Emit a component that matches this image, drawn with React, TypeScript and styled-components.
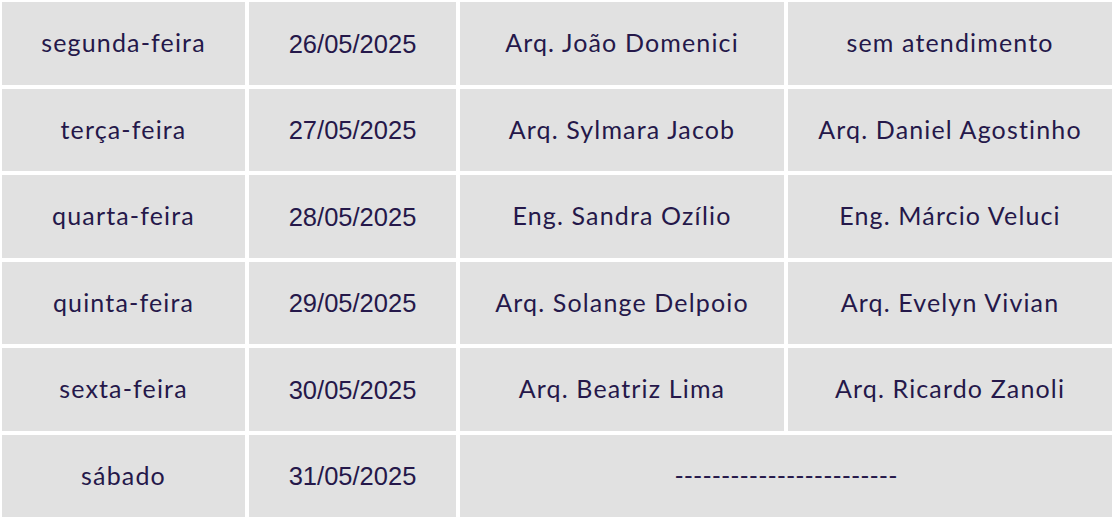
import * as React from 'react';
import styled, { createGlobalStyle } from 'styled-components';

const GlobalStyle = createGlobalStyle`
  html, body {
    margin: 0;
    padding: 0;
    background: #ffffff;
  }
`;

interface Plantao {
  dia: string;
  data: string;
  manha: string;
  tarde?: string;
}

const plantoes: Plantao[] = [
  { dia: 'segunda-feira', data: '26/05/2025', manha: 'Arq. João Domenici', tarde: 'sem atendimento' },
  { dia: 'terça-feira', data: '27/05/2025', manha: 'Arq. Sylmara Jacob', tarde: 'Arq. Daniel Agostinho' },
  { dia: 'quarta-feira', data: '28/05/2025', manha: 'Eng. Sandra Ozílio', tarde: 'Eng. Márcio Veluci' },
  { dia: 'quinta-feira', data: '29/05/2025', manha: 'Arq. Solange Delpoio', tarde: 'Arq. Evelyn Vivian' },
  { dia: 'sexta-feira', data: '30/05/2025', manha: 'Arq. Beatriz Lima', tarde: 'Arq. Ricardo Zanoli' },
  { dia: 'sábado', data: '31/05/2025', manha: '------------------------' },
];

const Wrapper = styled.div`
  padding: 2px 4px 4px 2px;
`;

const Table = styled.table`
  width: 1111px;
  border-collapse: separate;
  border-spacing: 4px;
  margin: -4px;
  table-layout: fixed;
`;

const Row = styled.tr`
  height: 82.5px;
`;

const Cell = styled.td<{ $numeric?: boolean }>`
  background: #e1e1e1;
  text-align: center;
  vertical-align: middle;
  padding: ${p => (p.$numeric ? '2px 0 0' : '0 0 1px')};
  color: #25184a;
  line-height: 1;
  font-family: ${p => (p.$numeric ? '"Liberation Sans", Arial, sans-serif' : 'Lato, "Noto Sans", sans-serif')};
  font-size: ${p => (p.$numeric ? '25.5px' : '25px')};
  letter-spacing: ${p => (p.$numeric ? '0' : '1.15px')};
`;

const EmptyCell = styled(Cell)`
  letter-spacing: 0;
`;

export default function App() {
  return (
    <Wrapper>
      <GlobalStyle />
      <Table>
        <colgroup>
          <col style={{ width: 243 }} />
          <col style={{ width: 207 }} />
          <col style={{ width: 324 }} />
          <col style={{ width: 324 }} />
        </colgroup>
        <tbody>
          {plantoes.map(p => (
            <Row key={p.data}>
              <Cell>{p.dia}</Cell>
              <Cell $numeric>{p.data}</Cell>
              {p.tarde ? (
                <>
                  <Cell>{p.manha}</Cell>
                  <Cell>{p.tarde}</Cell>
                </>
              ) : (
                <EmptyCell colSpan={2}>{p.manha}</EmptyCell>
              )}
            </Row>
          ))}
        </tbody>
      </Table>
    </Wrapper>
  );
}
